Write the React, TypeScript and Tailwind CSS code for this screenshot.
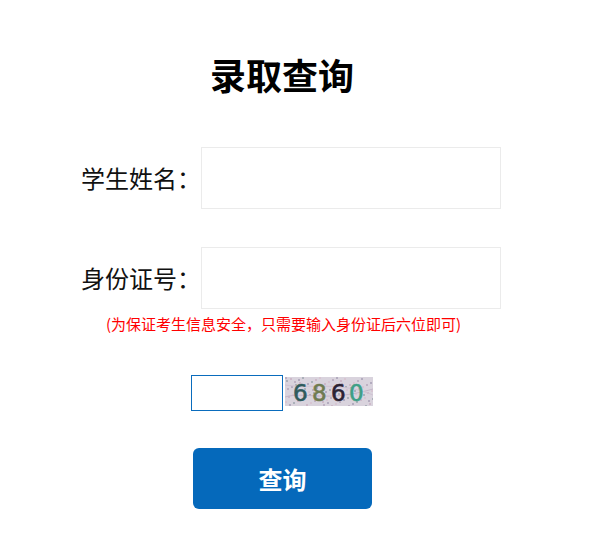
import React from "react";

// captcha noise, fixed so every render looks the same
const dots = Array.from({ length: 90 }, (_, i) => ({
  x: (i * 37) % 88,
  y: (i * 53) % 29,
  c: ["#b7a9bd", "#c9b3c4", "#a9a3b8", "#d6c2cf", "#9fa8b0"][i % 5],
}));

function Captcha() {
  return (
    <svg width="88" height="29" viewBox="0 0 88 29" className="block">
      <rect width="88" height="29" fill="#d9d3dd" />
      {dots.map((d, i) => (
        <rect key={i} x={d.x} y={d.y} width="2" height="2" fill={d.c} opacity="0.8" />
      ))}
      <path d="M0 20 C20 14, 40 26, 88 12" stroke="#c4b6c8" strokeWidth="1" fill="none" />
      <path d="M0 8 C25 12, 55 4, 88 18" stroke="#cfc2d2" strokeWidth="1" fill="none" />
      <g fontFamily="'DejaVu Sans', sans-serif" fontSize="23" stroke="currentColor" strokeWidth="0.6">
        <text x="8" y="24" fill="#2f5b5c" color="#2f5b5c">6</text>
        <text x="27" y="24" fill="#6f7b50" color="#6f7b50">8</text>
        <text x="46" y="24" fill="#2b2232" color="#2b2232">6</text>
        <text x="64" y="24" fill="#3e9f86" color="#3e9f86">0</text>
      </g>
    </svg>
  );
}

function Field({ label }: { label: string }) {
  return (
    <div className="flex items-center pl-[81px]">
      <span className="text-[24px] leading-[30px] text-[#111]">{label}</span>
      <input className="w-[300px] h-[62px] border border-[#ebebeb] outline-none px-2 text-[18px]" />
    </div>
  );
}

export default function App() {
  return (
    <div className="w-[598px] h-[545px] bg-white font-['Noto_Sans_CJK_SC','Microsoft_YaHei',sans-serif] overflow-hidden">
      <h1 className="mt-[56px] pl-[210px] text-[36px] leading-[36px] font-bold text-black">录取查询</h1>
      <div className="mt-[55px]">
        <Field label="学生姓名：" />
      </div>
      <div className="mt-[38px]">
        <Field label="身份证号：" />
      </div>
      <p className="mt-[7px] pl-[106px] text-[15px] leading-[15px] text-[#ff0000]">
        (为保证考生信息安全，只需要输入身份证后六位即可)
      </p>
      <div className="mt-[44px] flex items-start pl-[191px] gap-[2px]">
        <input className="w-[92px] h-[36px] border border-[#0a6cbd] outline-none px-1" />
        <div className="mt-[2px]">
          <Captcha />
        </div>
      </div>
      <button className="mt-[37px] ml-[193px] w-[179px] h-[61px] rounded-[6px] bg-[#0569bb] text-white text-[24px] font-bold">
        查询
      </button>
    </div>
  );
}
